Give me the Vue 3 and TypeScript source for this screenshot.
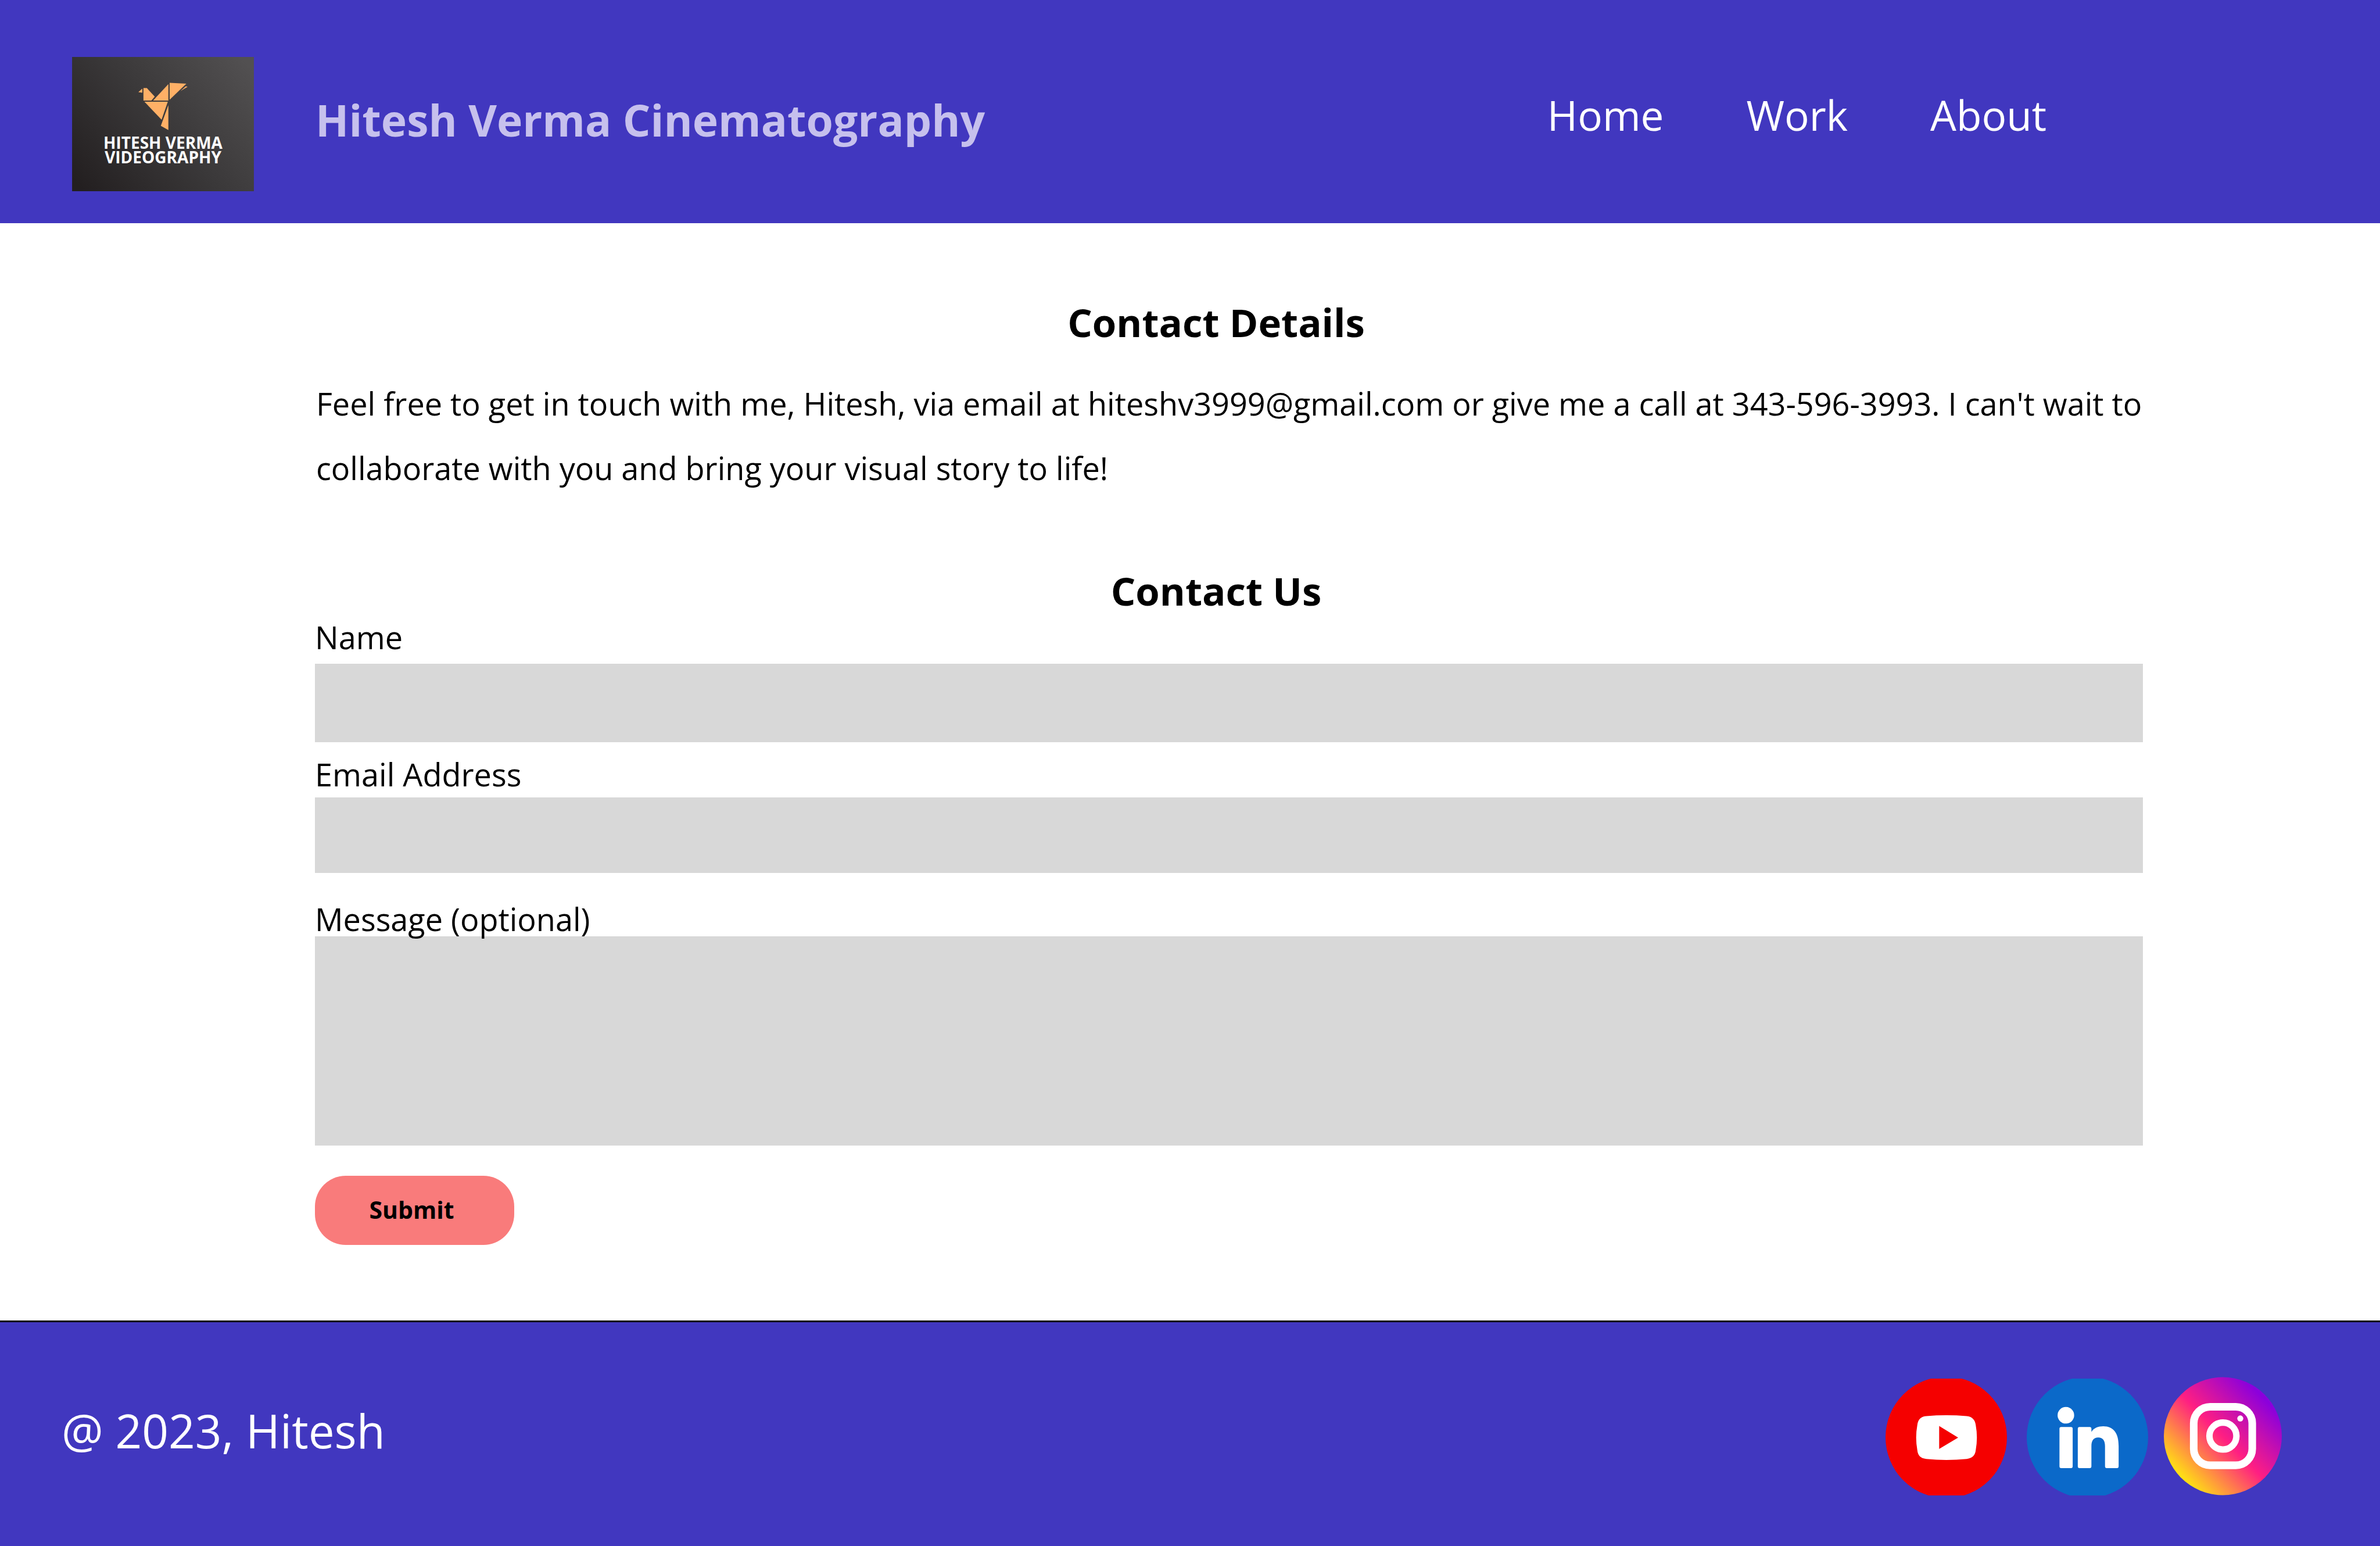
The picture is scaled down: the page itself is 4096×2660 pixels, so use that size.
<script setup lang="ts">
import { reactive } from 'vue'

interface NavLink {
  label: string
  href: string
}

const links: NavLink[] = [
  { label: 'Home', href: '#home' },
  { label: 'Work', href: '#work' },
  { label: 'About', href: '#about' },
]

const form = reactive({ name: '', email: '', message: '' })
</script>

<template>
  <div class="page">
    <header class="header">
      <div class="logo">
        <svg viewBox="0 0 321 237" aria-hidden="true">
          <defs>
            <linearGradient id="logo-bg" gradientUnits="userSpaceOnUse" x1="20" y1="237" x2="300" y2="0">
              <stop offset="0" stop-color="#231f20" />
              <stop offset="0.5" stop-color="#3a3839" />
              <stop offset="1" stop-color="#525051" />
            </linearGradient>
          </defs>
          <rect width="321" height="237" fill="url(#logo-bg)" />
          <g fill="#ffb066">
            <polygon points="117,62 124,56 124,63" />
            <polygon points="126,55 132,55 146,70 140,77 126,77" />
            <polygon points="143,77 170,48 170,77" />
            <polygon points="172.3,45.7 201.7,47.3 172.3,75.3" />
            <polygon points="191.3,60.3 200.7,51.7 204,52.7" />
            <polygon points="127.7,79 169,79 158,110.7" />
            <polygon points="170,85 170,129 156.7,121.7" />
          </g>
        </svg>
        <span class="logo-text">HITESH VERMA VIDEOGRAPHY</span>
      </div>
      <h1 class="brand">Hitesh Verma Cinematography</h1>
      <nav class="nav">
        <a v-for="link in links" :key="link.href" :href="link.href">{{ link.label }}</a>
      </nav>
    </header>

    <main class="main">
      <section class="details">
        <h2>Contact Details</h2>
        <p>
          Feel free to get in touch with me, Hitesh, via email at hiteshv3999@gmail.com or give me a call at
          343-596-3993. I can't wait to collaborate with you and bring your visual story to life!
        </p>
      </section>

      <form class="form" @submit.prevent>
        <h2>Contact Us</h2>
        <div class="field field-name">
          <label for="name">Name</label>
          <input id="name" v-model="form.name" type="text" />
        </div>
        <div class="field field-email">
          <label for="email">Email Address</label>
          <input id="email" v-model="form.email" type="email" />
        </div>
        <div class="field field-message">
          <label for="message">Message (optional)</label>
          <textarea id="message" v-model="form.message"></textarea>
        </div>
        <button type="submit">Submit</button>
      </form>
    </main>

    <footer class="footer">
      <p>@ 2023, Hitesh</p>
      <div class="social">
        <a class="youtube" href="#youtube" aria-label="YouTube">
          <svg viewBox="0 0 214 206">
            <circle cx="107" cy="103.5" r="107" fill="#f50000" />
            <path
              fill="#fff"
              d="M72 66Q107 63 143 66C153 67 158 73 159 82Q163 104 159 126C158 135 153 140.500 143 141.500Q107 145 72 141.500C61 140.500 57 135 56 126Q52 104 56 82C57 73 61 67 72 66Z"
            />
            <path fill="#f50000" d="M94.500 83.500L128 104L94.500 124Z" />
          </svg>
        </a>
        <a class="linkedin" href="#linkedin" aria-label="LinkedIn">
          <svg viewBox="0 0 214 206">
            <circle cx="107" cy="103.500" r="107" fill="#0b69c9" />
            <g fill="#fff">
              <circle cx="69" cy="64.600" r="14.600" />
              <rect x="57.700" y="85.300" width="23.300" height="72.300" rx="3" />
              <path
                d="M93 85.300H111Q114 85.300 114 88.300V94C118 87 126 84 135 84C153 84 162 96 162 119V154.600Q162 157.600 159 157.600H141Q138 157.600 138 154.600V119C138 109 134 103.600 126 103.600C118 103.600 114 109 114 119V154.600Q114 157.600 111 157.600H93Q90 157.600 90 154.600V88.300Q90 85.300 93 85.300Z"
              />
            </g>
          </svg>
        </a>
        <a class="instagram" href="#instagram" aria-label="Instagram">
          <svg viewBox="0 0 208 209">
            <defs>
              <linearGradient id="insta-bg" gradientUnits="userSpaceOnUse" x1="30" y1="173" x2="173" y2="34">
                <stop offset="0" stop-color="#ffdd15" />
                <stop offset="0.5" stop-color="#ff1f82" />
                <stop offset="1" stop-color="#8b00dc" />
              </linearGradient>
            </defs>
            <circle cx="104" cy="104.500" r="104" fill="url(#insta-bg)" />
            <g fill="none" stroke="#fff">
              <rect x="52.700" y="52.700" width="103.200" height="103.200" rx="29" stroke-width="13.400" />
              <circle cx="104.200" cy="104.300" r="23.800" stroke-width="11.400" />
            </g>
            <circle cx="134.800" cy="73.300" r="5.300" fill="#fff" />
          </svg>
        </a>
      </div>
    </footer>
  </div>
</template>

<style>
body {
  margin: 0;
}
</style>

<style scoped>
.page {
  display: flex;
  flex-direction: column;
  min-height: 100vh;
  background: #fff;
  color: #000;
  font-family: 'Open Sans', 'Noto Sans', sans-serif;
  font-size: 54px;
}

h1,
h2,
p {
  margin: 0;
}

a {
  color: inherit;
  text-decoration: none;
}

.header {
  display: flex;
  align-items: flex-start;
  box-sizing: border-box;
  height: 384px;
  padding: 0 574px 0 124px;
  background: #4137bf;
  color: #fff;
}

.logo {
  display: grid;
  flex: none;
  width: 313px;
  height: 231px;
  margin-top: 98px;
}

.logo svg,
.logo-text {
  grid-area: 1 / 1;
}

.logo svg {
  display: block;
  width: 100%;
  height: 100%;
}

.logo-text {
  padding: 135px 40px 0;
  font-size: 28px;
  font-weight: 700;
  line-height: 25px;
  text-align: center;
}

.brand {
  margin: 156px 0 0 106px;
  color: #c6c0ed;
  font-size: 75px;
  font-weight: 700;
  line-height: 100px;
}

.nav {
  display: flex;
  gap: 142px;
  margin: 148px 0 0 auto;
  font-size: 71px;
  line-height: 100px;
}

.main {
  flex: 1;
  padding: 120px 408px 0 542px;
}

h2 {
  padding-right: 44px;
  font-size: 67px;
  font-weight: 700;
  line-height: 100px;
  text-align: center;
}

.details p {
  padding: 35px 0 0 2px;
  line-height: 111px;
}

.form {
  display: flex;
  flex-direction: column;
  padding-top: 105px;
}

.field {
  display: flex;
  flex-direction: column;
}

.field-name {
  gap: 16px;
}

.field-email {
  gap: 10px;
  margin-top: 25px;
}

.field-message {
  margin-top: 49px;
}

/* keeps descenders visible above the field below */
label {
  position: relative;
  z-index: 1;
  line-height: 60px;
}

input,
textarea,
button {
  box-sizing: border-box;
  margin: 0;
  border: 0;
  font: inherit;
}

input,
textarea {
  width: 100%;
  padding: 0 32px;
  border-radius: 0;
  background: #d8d8d8;
  resize: none;
}

.field-name input {
  height: 135px;
}

.field-email input {
  height: 130px;
}

textarea {
  height: 360px;
}

button {
  width: 343px;
  height: 119px;
  margin-top: 52px;
  padding: 0 10px 4px 0;
  border-radius: 53px;
  background: #f97b7b;
  color: #000;
  font-size: 41px;
  font-weight: 700;
}

.footer {
  display: flex;
  align-items: flex-start;
  justify-content: space-between;
  box-sizing: border-box;
  height: 388px;
  padding: 0 169px 0 106px;
  border-top: 3px solid #000;
  background: #4137bf;
  color: #fff;
}

.footer p {
  margin-top: 132px;
  font-size: 80px;
  line-height: 108px;
}

.social {
  display: flex;
  align-items: flex-end;
  margin-top: 94px;
}

.social a,
.social svg {
  display: block;
}

.youtube,
.linkedin {
  width: 209px;
  height: 201px;
}

.linkedin {
  margin: 0 27px 0 34px;
}

.instagram {
  width: 203px;
  height: 204px;
}
</style>
